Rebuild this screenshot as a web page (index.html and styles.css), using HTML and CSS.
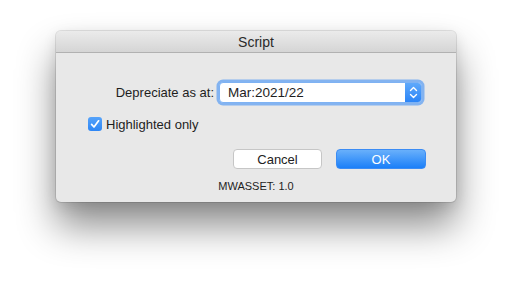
FILE: index.html
```html
<!DOCTYPE html>
<html>
<head>
<meta charset="utf-8">
<link rel="stylesheet" href="styles.css">
</head>
<body>
<div class="window">
  <div class="titlebar">Script</div>
  <div class="content">
    <div class="row-date">
      <label class="label">Depreciate as at:</label>
      <div class="popup">
        <span class="popup-value">Mar:2021/22</span>
        <span class="stepper">
          <svg width="9" height="13" viewBox="0 0 9 13"><path d="M1.5 4.5 L4.5 1.5 L7.5 4.5 M1.5 8.5 L4.5 11.5 L7.5 8.5" fill="none" stroke="#fff" stroke-width="1.4" stroke-linecap="round" stroke-linejoin="round"/></svg>
        </span>
      </div>
    </div>
    <div class="row-check">
      <span class="checkbox">
        <svg width="14" height="14" viewBox="0 0 14 14"><path d="M3.6 7.4 L6 10 L10.6 3.8" fill="none" stroke="#fff" stroke-width="1.7" stroke-linecap="round" stroke-linejoin="round"/></svg>
      </span>
      <span class="check-label">Highlighted only</span>
    </div>
    <div class="row-buttons">
      <button class="btn btn-cancel">Cancel</button>
      <button class="btn btn-ok">OK</button>
    </div>
    <div class="version">MWASSET: 1.0</div>
  </div>
</div>
</body>
</html>
```

FILE: styles.css
```css
html, body {
  margin: 0;
  padding: 0;
}
body {
  background: #ffffff;
  width: 512px;
  height: 282px;
  overflow: hidden;
  font-family: "Liberation Sans", Arial, sans-serif;
  font-size: 13px;
  color: #1e1e1e;
}
.window {
  margin: 31px 0 0 56px;
  width: 400px;
  height: 171px;
  background: #e8e8e8;
  border-radius: 5px;
  box-shadow: 0 0 0 1px rgba(0,0,0,0.10), 0 4px 14px rgba(0,0,0,0.10), 0 24px 38px rgba(0,0,0,0.45);
  display: flex;
  flex-direction: column;
  overflow: hidden;
}
.titlebar {
  height: 21px;
  line-height: 22px;
  text-align: center;
  font-size: 14px;
  color: #2a2a2a;
  background: linear-gradient(#ebebeb, #d5d5d5);
  border-bottom: 1px solid #b1b1b1;
  flex: none;
}
.content {
  flex: 1;
  display: flex;
  flex-direction: column;
  padding: 28px 30px 0 32px;
}
.row-date {
  display: flex;
  justify-content: flex-end;
  align-items: center;
  margin-right: 4px;
  height: 22px;
}
.label {
  margin-right: 5px;
}
.popup {
  width: 203px;
  height: 21px;
  box-sizing: border-box;
  background: #fff;
  border: 1px solid #7eb2f3;
  border-radius: 4px;
  box-shadow: 0 0 0 2.5px rgba(98,162,243,0.75);
  display: flex;
  align-items: center;
  overflow: hidden;
}
.popup-value {
  flex: 1;
  padding-left: 8px;
  font-size: 13.5px;
}
.stepper {
  width: 16px;
  height: 100%;
  background: linear-gradient(#5fa9fb, #2a84f7);
  display: flex;
  align-items: center;
  justify-content: center;
}
.row-check {
  display: flex;
  align-items: center;
  margin-top: 14px;
  height: 14px;
}
.checkbox {
  width: 14px;
  height: 14px;
  border-radius: 3px;
  background: linear-gradient(#56a3fa, #2d86f5);
  display: flex;
}
.check-label {
  margin-left: 4px;
}
.row-buttons {
  display: flex;
  justify-content: flex-end;
  gap: 14px;
  margin-top: 18px;
}
.btn {
  font-family: "Liberation Sans", Arial, sans-serif;
  font-size: 13px;
  width: 90px;
  height: 20px;
  border-radius: 4px;
  padding: 0;
  margin: 0;
}
.btn-cancel {
  width: 89px;
  background: #ffffff;
  border: 1px solid #c6c6c6;
  color: #222;
}
.btn-ok {
  background: linear-gradient(#69b0fb, #1b7ff8);
  border: 1px solid #3b8cf4;
  color: #fff;
}
.version {
  text-align: center;
  font-size: 11px;
  margin-top: 11px;
  margin-left: -2px;
  color: #1e1e1e;
}
```
